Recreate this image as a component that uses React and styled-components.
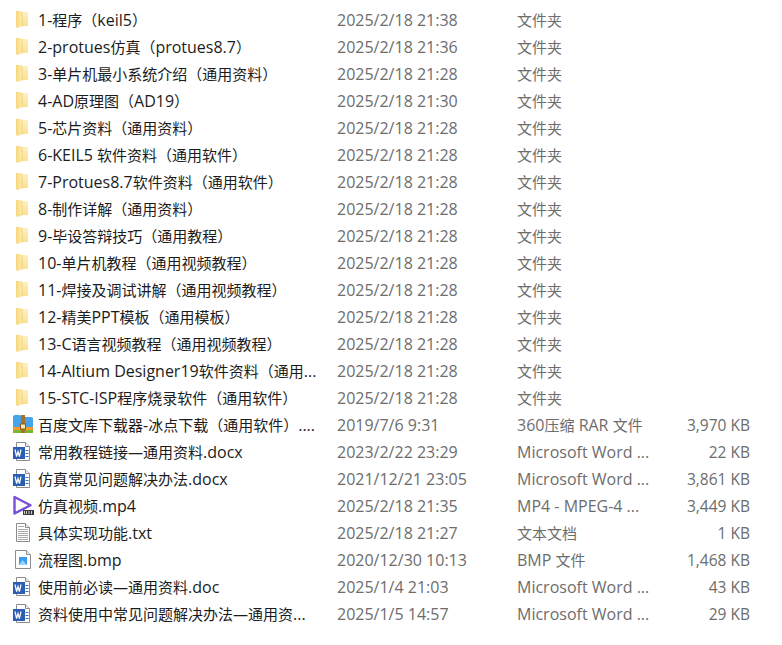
import React from 'react';
import styled, { createGlobalStyle } from 'styled-components';

const GlobalStyle = createGlobalStyle`
  html, body {
    margin: 0;
    background: #fff;
  }
  body {
    font-family: "Open Sans", "Noto Sans CJK SC", sans-serif;
  }
`;

const List = styled.div`
  width: 782px;
  height: 645px;
  padding-top: 6px;
  box-sizing: border-box;
  overflow: hidden;
`;

const Row = styled.div`
  display: grid;
  grid-template-columns: 38px 299px 180px 150px 83px;
  height: 27px;
  align-items: center;
  font-size: 16px;
  line-height: 24px;
  white-space: nowrap;
`;

const IconCell = styled.div`
  display: flex;
  padding-left: 12px;
  height: 22px;
  align-items: center;
`;

const Name = styled.div`
  color: #1c1c1c;
`;

const Meta = styled.div`
  color: #6d6d6d;
`;

const Size = styled(Meta)`
  font-size: 15.5px;
  text-align: right;
`;

// the CJK glyphs sit a little smaller than the latin ones in the reference
const Cjk = styled.span`
  font-size: 15px;
`;

const Label = ({ text }) =>
  text.split(/([\u3000-\u9fff\uff00-\uffef—]+)/).map((part, i) =>
    i % 2 ? <Cjk key={i}>{part}</Cjk> : part
  );

const FolderIcon = () => (
  <svg width="22" height="22" viewBox="0 0 22 22">
    <defs>
      <linearGradient id="folderBack" x1="0" y1="0" x2="0" y2="1">
        <stop offset="0" stopColor="#fef0c0" />
        <stop offset="1" stopColor="#fbe08f" />
      </linearGradient>
      <linearGradient id="folderFront" x1="0" y1="0" x2="1" y2="0">
        <stop offset="0" stopColor="#f6d678" />
        <stop offset="1" stopColor="#fdedb6" />
      </linearGradient>
    </defs>
    <path d="M8 3h8v14H8z" fill="url(#folderBack)" />
    <path d="M4 2h5l1 1v14.5l-5 1.5-1-1.5z" fill="url(#folderFront)" />
    <path d="M10 3v14.5" stroke="#eec869" strokeWidth="0.7" />
  </svg>
);

const ArchiveIcon = () => (
  <svg width="22" height="22" viewBox="0 0 22 22">
    <path d="M1 3a2 2 0 0 1 2-2h5l2 2h9a2 2 0 0 1 2 2v10H1z" fill="#45a5e8" />
    <rect x="1" y="13" width="20" height="3" fill="#f39a26" />
    <rect x="1" y="16" width="20" height="3" fill="#79b82c" />
    <rect x="9" y="1" width="4" height="18" fill="#a9702a" />
    <rect x="8.5" y="10" width="5" height="5" fill="#fbe7b6" stroke="#8a5a20" />
  </svg>
);

const PageOutline = ({ x = 4, w = 14, children }) => (
  <svg width="22" height="22" viewBox="0 0 22 22">
    <path
      d={`M${x + 0.5} 1.5h${w - 5}l4 4v${14}h-${w - 1}z`}
      fill="#fff"
      stroke="#8c8c8c"
    />
    <path d={`M${x + w - 4.5} 1.5v4h4`} fill="#efefef" stroke="#8c8c8c" />
    {children}
  </svg>
);

const WordIcon = () => (
  <PageOutline>
    <path d="M13.5 9.5h3M13.5 12.5h3M13.5 15.5h3" stroke="#3b74c4" />
    <rect x="1" y="6" width="12" height="12" fill="#2b5fb4" />
    <path d="M3 8.5l1.6 7 1.4-5 1.4 5 1.6-7" fill="none" stroke="#fff" strokeWidth="1.2" />
  </PageOutline>
);

const VideoIcon = () => (
  <svg width="22" height="22" viewBox="0 0 22 22">
    <path d="M2.5 2v16.5l16-8.2z" fill="#fff" stroke="#7a4fd8" strokeWidth="2.4" strokeLinejoin="round" />
    <rect x="11" y="15" width="11" height="5" fill="#3a3a3a" />
    <path d="M12.5 16v3M14.5 16v3M17 16v3M19.5 16v3" stroke="#cfcfcf" />
  </svg>
);

const TextIcon = () => (
  <PageOutline>
    <path d="M6 4.5h6M6 7.5h10M6 9.5h10M6 11.5h10M6 13.5h10M6 15.5h10M6 17.5h10" stroke="#a8a8a8" />
  </PageOutline>
);

const ImageIcon = () => (
  <PageOutline x={3} w={16}>
    <rect x="7" y="8" width="8" height="8" fill="#3d9bea" />
    <path d="M7 16l3.5-5 4.5 5z" fill="#9ad2f8" />
  </PageOutline>
);

const icons = {
  folder: FolderIcon,
  archive: ArchiveIcon,
  word: WordIcon,
  video: VideoIcon,
  text: TextIcon,
  image: ImageIcon,
};

const folderType = '文件夹';
const wordType = 'Microsoft Word ...';

const files = [
  ['folder', '1-程序（keil5）', '2025/2/18 21:38', folderType, ''],
  ['folder', '2-protues仿真（protues8.7）', '2025/2/18 21:36', folderType, ''],
  ['folder', '3-单片机最小系统介绍（通用资料）', '2025/2/18 21:28', folderType, ''],
  ['folder', '4-AD原理图（AD19）', '2025/2/18 21:30', folderType, ''],
  ['folder', '5-芯片资料（通用资料）', '2025/2/18 21:28', folderType, ''],
  ['folder', '6-KEIL5 软件资料（通用软件）', '2025/2/18 21:28', folderType, ''],
  ['folder', '7-Protues8.7软件资料（通用软件）', '2025/2/18 21:28', folderType, ''],
  ['folder', '8-制作详解（通用资料）', '2025/2/18 21:28', folderType, ''],
  ['folder', '9-毕设答辩技巧（通用教程）', '2025/2/18 21:28', folderType, ''],
  ['folder', '10-单片机教程（通用视频教程）', '2025/2/18 21:28', folderType, ''],
  ['folder', '11-焊接及调试讲解（通用视频教程）', '2025/2/18 21:28', folderType, ''],
  ['folder', '12-精美PPT模板（通用模板）', '2025/2/18 21:28', folderType, ''],
  ['folder', '13-C语言视频教程（通用视频教程）', '2025/2/18 21:28', folderType, ''],
  ['folder', '14-Altium Designer19软件资料（通用...', '2025/2/18 21:28', folderType, ''],
  ['folder', '15-STC-ISP程序烧录软件（通用软件）', '2025/2/18 21:28', folderType, ''],
  ['archive', '百度文库下载器-冰点下载（通用软件）....', '2019/7/6 9:31', '360压缩 RAR 文件', '3,970 KB'],
  ['word', '常用教程链接—通用资料.docx', '2023/2/22 23:29', wordType, '22 KB'],
  ['word', '仿真常见问题解决办法.docx', '2021/12/21 23:05', wordType, '3,861 KB'],
  ['video', '仿真视频.mp4', '2025/2/18 21:35', 'MP4 - MPEG-4 ...', '3,449 KB'],
  ['text', '具体实现功能.txt', '2025/2/18 21:27', '文本文档', '1 KB'],
  ['image', '流程图.bmp', '2020/12/30 10:13', 'BMP 文件', '1,468 KB'],
  ['word', '使用前必读—通用资料.doc', '2025/1/4 21:03', wordType, '43 KB'],
  ['word', '资料使用中常见问题解决办法—通用资...', '2025/1/5 14:57', wordType, '29 KB'],
];

export default function App() {
  return (
    <>
      <GlobalStyle />
      <List>
        {files.map(([kind, name, date, type, size]) => {
          const Icon = icons[kind];
          return (
            <Row key={name}>
              <IconCell><Icon /></IconCell>
              <Name><Label text={name} /></Name>
              <Meta>{date}</Meta>
              <Meta><Label text={type} /></Meta>
              <Size>{size}</Size>
            </Row>
          );
        })}
      </List>
    </>
  );
}
